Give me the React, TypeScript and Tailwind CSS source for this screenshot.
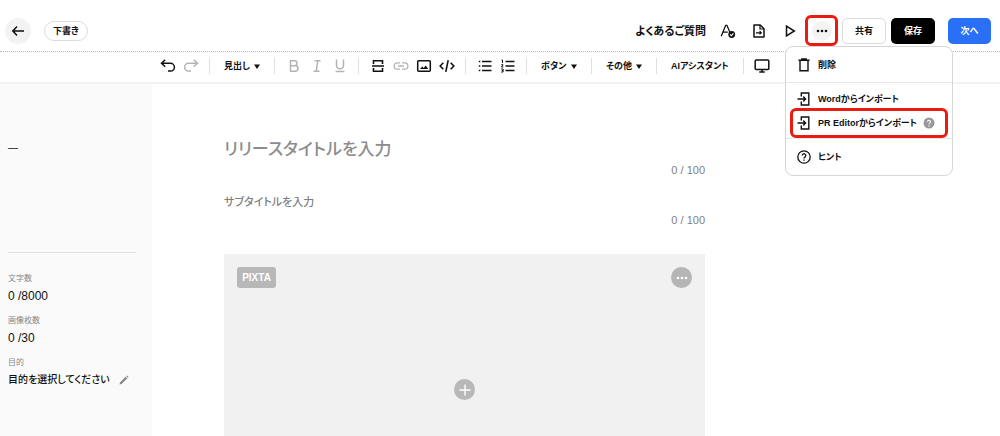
import type { ReactNode } from "react";

type IconProps = { className?: string };

function BackIcon() {
  return (
    <svg className="h-3 w-3" viewBox="0 0 12 12" fill="none" stroke="currentColor" strokeWidth="1.5">
      <path d="M5 1.5L.9 6 5 10.5M1 6h11" />
    </svg>
  );
}

function UndoIcon({ className = "" }: IconProps) {
  return (
    <svg className={`h-4 w-4 ${className}`} viewBox="0 0 16 16" fill="none" stroke="currentColor" strokeWidth="1.5">
      <path d="M5.2 1.8L1.5 5.3l3.7 3.5M1.8 5.3h8.7a3.9 3.9 0 0 1 0 7.8H8" />
    </svg>
  );
}

function RuleIcon() {
  return (
    <svg className="h-4 w-4" viewBox="0 0 16 16" fill="none" stroke="currentColor" strokeWidth="1.6">
      <path d="M2 8h12M3.5 6V2.7h9V6M3.5 10v3.3h9V10" />
    </svg>
  );
}

function LinkIcon() {
  return (
    <svg className="h-4 w-4" viewBox="0 0 16 16" fill="none" stroke="currentColor" strokeWidth="1.3">
      <path d="M7 4.8H4.3a3.2 3.2 0 0 0 0 6.4H7M9 4.8h2.7a3.2 3.2 0 0 1 0 6.4H9M5 8h6" />
    </svg>
  );
}

function ImageIcon() {
  return (
    <svg className="h-4 w-4" viewBox="0 0 16 16" fill="none" stroke="currentColor" strokeWidth="1.5">
      <rect x="1.7" y="2.7" width="12.6" height="10.6" rx="1" />
      <path d="M4 11l2.2-2.6 1.5 1.5L9.8 7.5 12.2 11z" fill="currentColor" stroke="none" />
    </svg>
  );
}

function CodeIcon() {
  return (
    <svg className="h-4 w-4" viewBox="0 0 16 16" fill="none" stroke="currentColor" strokeWidth="1.6">
      <path d="M4.3 4.8L1.2 8l3.1 3.2M11.7 4.8L14.8 8l-3.1 3.2M9.2 2.2L6.8 13.8" />
    </svg>
  );
}

function BulletListIcon() {
  return (
    <svg className="h-4 w-4" viewBox="0 0 16 16" fill="none" stroke="currentColor" strokeWidth="1.5">
      <path d="M5 3.5h9.5M5 8h9.5M5 12.5h9.5M1.8 3.5h1.5M1.8 8h1.5M1.8 12.5h1.5" />
    </svg>
  );
}

function NumberListIcon() {
  return (
    <svg className="h-4 w-4" viewBox="0 0 16 16" fill="none" stroke="currentColor">
      <path d="M5.5 3.5h9M5.5 8h9M5.5 12.5h9" strokeWidth="1.5" />
      <path d="M1.5 2h1v3M1.2 6.8h1.9L1.5 9h1.8M1.2 11h1.9v3H1.2M1.8 12.5h1.2" strokeWidth="1" />
    </svg>
  );
}

function MonitorIcon() {
  return (
    <svg className="h-4 w-4" viewBox="0 0 16 16" fill="none" stroke="currentColor" strokeWidth="1.5">
      <rect x="1.2" y="2" width="13.6" height="9.6" rx="1" />
      <path d="M8 11.5v2M5.3 14h5.4" />
    </svg>
  );
}

function ProofreadIcon() {
  return (
    <svg className="h-4 w-4" viewBox="0 0 16 16" fill="none" stroke="currentColor">
      <path d="M1.2 13.2L5.7 2.3h1.2l3 7M3.2 9.2h4.6" strokeWidth="1.3" />
      <circle cx="11.7" cy="11.5" r="3.4" fill="currentColor" stroke="none" />
      <path d="M10 11.4l1.3 1.3 2.2-2.3" stroke="white" strokeWidth="1.1" />
    </svg>
  );
}

function FileIcon() {
  return (
    <svg className="h-4 w-4" viewBox="0 0 16 16" fill="none" stroke="currentColor" strokeWidth="1.5">
      <path d="M3 2h6.2L13 5.8V14H3z" strokeLinejoin="round" />
      <path d="M9 2v4h4" strokeWidth="1.2" />
      <path d="M5 9.8h5M8.6 8.2l1.7 1.6-1.7 1.6" strokeWidth="1.2" />
    </svg>
  );
}

function PlayIcon() {
  return (
    <svg className="h-4 w-4" viewBox="0 0 16 16" fill="none" stroke="currentColor" strokeWidth="1.5">
      <path d="M4.5 3.2v9.6L12.3 8z" />
    </svg>
  );
}

function DotsIcon() {
  return (
    <svg className="h-3 w-3" viewBox="0 0 12 12" fill="currentColor">
      <circle cx="2" cy="6" r="1.3" />
      <circle cx="6" cy="6" r="1.3" />
      <circle cx="10" cy="6" r="1.3" />
    </svg>
  );
}

function TrashIcon() {
  return (
    <svg className="h-4 w-4" viewBox="0 0 16 16" fill="none" stroke="currentColor" strokeWidth="1.4">
      <path d="M2.5 3.3h11M5.8 3V1.9h4.4V3M4 3.5v10.2h8V3.5" />
    </svg>
  );
}

function ImportIcon() {
  return (
    <svg className="h-4 w-4" viewBox="0 0 16 16" fill="none" stroke="currentColor" strokeWidth="1.4">
      <path d="M5.3 5.5V2h7.5v12H5.3v-3.5M1.5 8h8M7.2 5.6L9.6 8l-2.4 2.4" />
    </svg>
  );
}

function HintIcon() {
  return (
    <svg className="h-4 w-4" viewBox="0 0 16 16" fill="none" stroke="currentColor" strokeWidth="1.3">
      <circle cx="8" cy="8" r="6.2" />
      <path d="M6.2 6.5a1.8 1.8 0 1 1 2.7 1.6c-.6.3-.9.7-.9 1.3" />
      <path d="M8 10.5v1.3" />
    </svg>
  );
}

function HelpBadge() {
  return (
    <svg className="h-3 w-3 text-[#999999]" viewBox="0 0 12 12" fill="none">
      <circle cx="6" cy="6" r="5.5" fill="currentColor" />
      <path d="M4.5 4.8a1.5 1.5 0 1 1 2.3 1.3c-.5.3-.8.5-.8 1.1M6 8.2v1.2" stroke="white" strokeWidth="1.1" />
    </svg>
  );
}

function PencilIcon() {
  return (
    <svg className="h-3 w-3 text-[#888888]" viewBox="0 0 12 12" fill="currentColor">
      <path d="M1.5 10.5l.5-2.1 5.6-5.6 1.6 1.6-5.6 5.6zM8.2 2.2l.8-.8 1.6 1.6-.8.8z" />
    </svg>
  );
}

function Separator() {
  return <span className="mx-[7px] h-4 w-px shrink-0 bg-[#e0e0e0]" />;
}

type ToolButtonProps = { label: string; muted?: boolean; children: ReactNode };

function ToolButton({ label, muted, children }: ToolButtonProps) {
  return (
    <button
      type="button"
      aria-label={label}
      className={`flex h-6 w-[23px] shrink-0 items-center justify-center ${muted ? "text-[#b3b3b3]" : "text-[#111111]"}`}
    >
      {children}
    </button>
  );
}

function ToolMenu({ label }: { label: string }) {
  return (
    <button type="button" className="flex h-6 w-[50px] shrink-0 items-center justify-between pt-0.5 pr-[7px] pl-[7px] text-[9px] font-bold whitespace-nowrap">
      {label}
      <svg className="h-1.5 w-1.5" viewBox="0 0 6 6" fill="currentColor">
        <path d="M0 .5h6L3 5z" />
      </svg>
    </button>
  );
}

function MenuItem({ icon, label }: { icon: ReactNode; label: string }) {
  return (
    <button type="button" role="menuitem" className="flex h-6 w-full items-center gap-1.5 px-2.5 text-[9px] font-bold whitespace-nowrap">
      {icon}
      <span className="pt-0.5">{label}</span>
    </button>
  );
}

function MoreMenu() {
  return (
    <div
      role="menu"
      className="absolute top-full left-[-20px] z-10 w-[168px] rounded-lg border border-[#d6d6d6] bg-white"
    >
      <div className="pt-1.5 pb-[5px]">
        <MenuItem icon={<TrashIcon />} label="削除" />
      </div>
      <div className="border-y border-[#e8e8e8] px-1">
        <div className="-mx-1 pt-1">
          <MenuItem icon={<ImportIcon />} label="Wordからインポート" />
        </div>
        <div className="-mt-[3px] flex h-[30px] items-center rounded-md border-3 border-[#ea1c12]">
          <button type="button" role="menuitem" className="flex w-full items-center gap-1.5 pl-[3px] text-[9px] font-bold whitespace-nowrap">
            <ImportIcon />
            <span className="pt-0.5">PR Editorからインポート</span>
            <HelpBadge />
          </button>
        </div>
      </div>
      <div className="py-1.5">
        <MenuItem icon={<HintIcon />} label="ヒント" />
      </div>
    </div>
  );
}

function Header() {
  return (
    <header className="flex h-[52px] shrink-0 items-center border-b border-dotted border-[#b8b8b8] pt-2.5 pr-[9px] pl-[5px]">
      <button type="button" aria-label="戻る" className="flex h-[26px] w-[26px] items-center justify-center rounded-full bg-[#f3f3f3]">
        <BackIcon />
      </button>
      <span className="ml-[13px] flex h-5 items-center rounded-full border border-[#dcdcdc] px-2 pt-0.5 text-[9px] font-bold">下書き</span>

      <nav className="ml-auto flex items-center">
        <a href="#faq" className="mr-1.5 pt-0.5 text-[11px] font-bold whitespace-nowrap">よくあるご質問</a>
        <button type="button" aria-label="校正" className="flex w-[31px] justify-center"><ProofreadIcon /></button>
        <button type="button" aria-label="書き出し" className="flex w-[31px] justify-center"><FileIcon /></button>
        <button type="button" aria-label="プレビュー" className="flex w-[31px] justify-center"><PlayIcon /></button>
        <div className="relative mr-1">
          <button
            type="button"
            aria-label="その他のメニュー"
            aria-expanded="true"
            className="flex h-[31px] w-[33px] items-center justify-center rounded-md border-3 border-[#ea1c12]"
          >
            <span className="flex h-5 w-5 items-center justify-center rounded-full bg-[#f3f3f3]">
              <DotsIcon />
            </span>
          </button>
          <MoreMenu />
        </div>
        <button type="button" className="h-[26px] w-11 rounded-[5px] border border-[#dcdcdc] pt-0.5 text-[9px] font-bold">共有</button>
        <button type="button" className="ml-[5px] h-[26px] w-11 rounded-[5px] bg-black pt-0.5 text-[9px] font-bold text-white">保存</button>
        <button type="button" className="ml-[13px] h-[26px] w-[43px] rounded-[5px] bg-[#2970f6] pt-0.5 text-[9px] font-bold text-white">次へ</button>
      </nav>
    </header>
  );
}

function Toolbar() {
  return (
    <div role="toolbar" className="flex h-8 shrink-0 items-center border-b-2 border-[#f1f1f1] pb-0.5 pl-[156px]">
      <ToolButton label="元に戻す"><UndoIcon /></ToolButton>
      <ToolButton label="やり直す" muted><UndoIcon className="-scale-x-100" /></ToolButton>
      <Separator />
      <ToolMenu label="見出し" />
      <Separator />
      <ToolButton label="太字" muted>
        <svg className="h-4 w-4" viewBox="0 0 16 16" fill="none" stroke="currentColor" strokeWidth="1.5">
          <path d="M4.5 2.7h4a2.5 2.5 0 0 1 0 5h-4zM4.5 7.7h4.8a2.8 2.8 0 0 1 0 5.6H4.5z" />
        </svg>
      </ToolButton>
      <ToolButton label="斜体" muted>
        <svg className="h-4 w-4" viewBox="0 0 16 16" fill="none" stroke="currentColor" strokeWidth="1.5">
          <path d="M5.5 2.7h6M4.5 13.3h6M8.8 2.7L7.2 13.3" />
        </svg>
      </ToolButton>
      <ToolButton label="下線" muted>
        <svg className="h-4 w-4" viewBox="0 0 16 16" fill="none" stroke="currentColor" strokeWidth="1.5">
          <path d="M4.5 1.5v5.8a3.5 3.5 0 0 0 7 0V1.5M3.5 13.6h9" />
        </svg>
      </ToolButton>
      <Separator />
      <ToolButton label="区切り線"><RuleIcon /></ToolButton>
      <ToolButton label="リンク" muted><LinkIcon /></ToolButton>
      <ToolButton label="画像"><ImageIcon /></ToolButton>
      <ToolButton label="埋め込み"><CodeIcon /></ToolButton>
      <Separator />
      <ToolButton label="箇条書き"><BulletListIcon /></ToolButton>
      <ToolButton label="番号付きリスト"><NumberListIcon /></ToolButton>
      <Separator />
      <ToolMenu label="ボタン" />
      <Separator />
      <ToolMenu label="その他" />
      <Separator />
      <button type="button" className="h-6 shrink-0 px-[7px] pt-0.5 text-[9px] font-bold whitespace-nowrap">AIアシスタント</button>
      <Separator />
      <ToolButton label="PC表示"><MonitorIcon /></ToolButton>
    </div>
  );
}

function Sidebar() {
  return (
    <aside className="flex w-[152px] shrink-0 flex-col bg-[#fafafa] pr-4 pl-2">
      <p className="mt-14 text-[10px] leading-4 font-medium">—</p>
      <hr className="mt-24 border-[#e0e0e0]" />
      <dl className="mt-[18px]">
        <dt className="text-[8px] leading-4 text-[#888888]">文字数</dt>
        <dd className="mb-2 text-[12px] leading-[18px]">0 /8000</dd>
        <dt className="text-[8px] leading-4 text-[#888888]">画像枚数</dt>
        <dd className="mb-2 text-[12px] leading-[18px]">0 /30</dd>
        <dt className="text-[8px] leading-4 text-[#888888]">目的</dt>
        <dd className="text-[10px] leading-[18px] font-medium">
          <button type="button" className="flex items-center gap-2 whitespace-nowrap">
            目的を選択してください
            <PencilIcon />
          </button>
        </dd>
      </dl>
    </aside>
  );
}

function Editor() {
  return (
    <main className="min-w-0 flex-1 pt-[54px] pr-[295px] pl-[72px]">
      <input
        aria-label="リリースタイトル"
        placeholder="リリースタイトルを入力"
        className="block h-6 w-full text-[17px] leading-6 font-medium outline-none placeholder:text-[#8c8c8c]"
      />
      <p className="text-right text-[11px] leading-4 text-[#808080]">0 / 100</p>
      <input
        aria-label="サブタイトル"
        placeholder="サブタイトルを入力"
        className="mt-3.5 block h-5 w-full text-[11px] leading-5 font-medium outline-none placeholder:text-[#808080]"
      />
      <p className="text-right text-[11px] leading-4 text-[#808080]">0 / 100</p>
      <section className="mt-[26px] flex h-[272px] flex-col bg-[#f1f1f1] px-[13px] pt-[13px]">
        <div className="flex items-center justify-between">
          <button type="button" className="h-[21px] w-[39px] rounded-[3px] bg-[#b8b8b8] text-[10px] font-bold text-white">PIXTA</button>
          <button type="button" aria-label="画像メニュー" className="flex h-[21px] w-[21px] items-center justify-center rounded-full bg-[#b5b5b5] text-white">
            <DotsIcon />
          </button>
        </div>
        <button type="button" aria-label="画像を追加" className="mx-auto mt-[91px] flex h-[21px] w-[21px] items-center justify-center rounded-full bg-[#b8b8b8] text-white">
          <svg className="h-3 w-3" viewBox="0 0 12 12" fill="none" stroke="currentColor" strokeWidth="1.4">
            <path d="M6 .5v11M.5 6h11" />
          </svg>
        </button>
      </section>
    </main>
  );
}

export default function App() {
  return (
    <div className="flex h-screen flex-col overflow-hidden bg-white font-['Liberation_Sans','Noto_Sans_CJK_JP',sans-serif] text-[#111111] [font-feature-settings:'palt']">
      <Header />
      <Toolbar />
      <div className="flex min-h-0 flex-1">
        <Sidebar />
        <Editor />
      </div>
    </div>
  );
}
